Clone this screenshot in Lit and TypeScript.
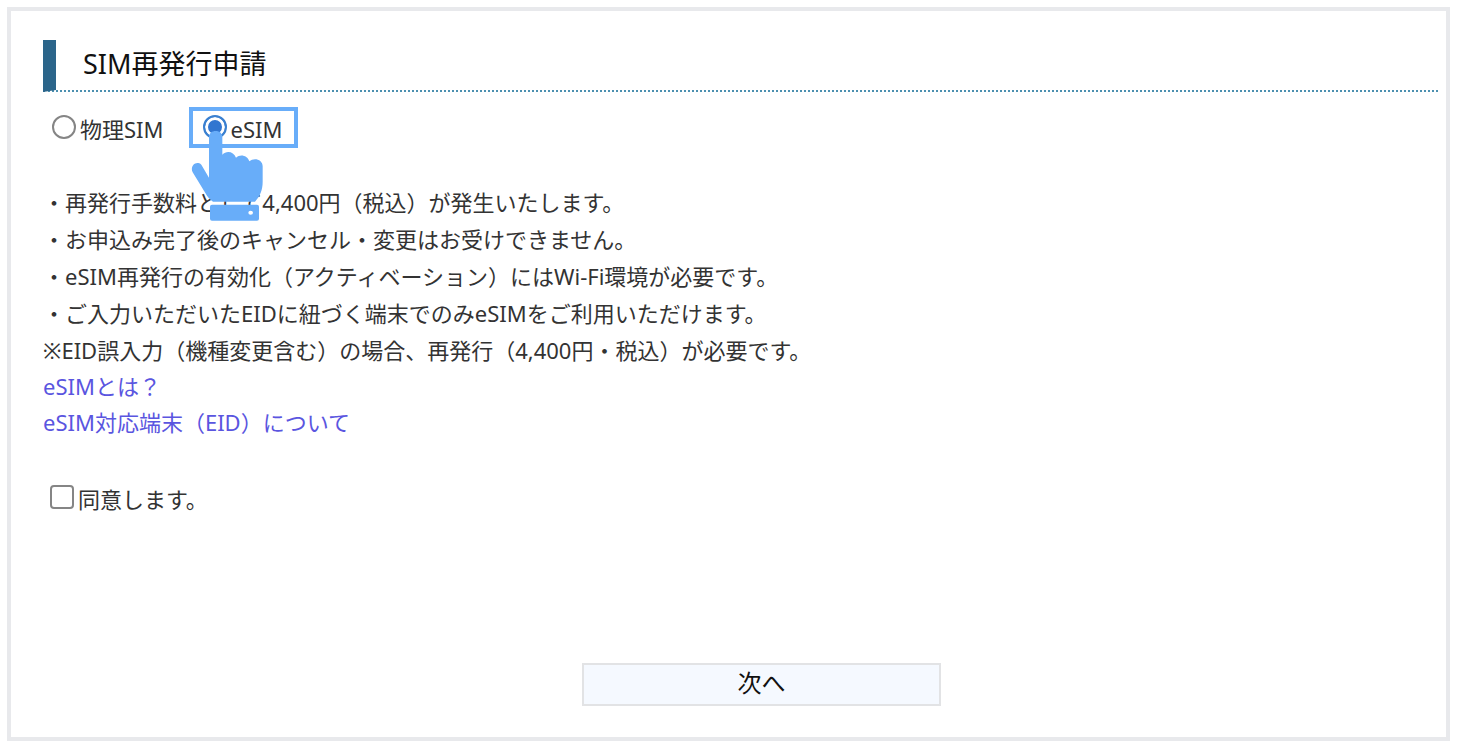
import { LitElement, html, css } from "lit";
import { customElement, state } from "lit/decorators.js";

@customElement("app-root")
export class AppRoot extends LitElement {
  static styles = css`
    :host {
      display: block;
      box-sizing: border-box;
      padding: 7px 8px 9px 7px;
      background: #fff;
      color: #333;
      font-family: "Noto Sans", "Noto Sans CJK JP", sans-serif;
      font-size: 22px;
    }
    .card {
      box-sizing: border-box;
      min-height: calc(100vh - 16px);
      display: flex;
      flex-direction: column;
      border: 4px solid #e8e9ec;
      padding: 29px 8px 31px 32px;
    }
    .title {
      margin: 0;
      padding: 0 0 2px 27px;
      border-left: 13px solid #2b658a;
      border-bottom: 2px dotted #4c90b0;
      color: #111;
      font-size: 27px;
      font-weight: 400;
      line-height: 48px;
    }
    .options {
      display: flex;
      gap: 25px;
      margin: 15px 0 36px 9px;
      padding: 0;
      border: 0;
    }
    .choice {
      position: relative;
      display: flex;
      align-items: center;
      gap: 4px;
      line-height: 29px;
      padding: 8px 0 4px;
    }
    .marked {
      padding: 4px 12px 0 10px;
      border: 4px solid #68adf9;
    }
    .agree {
      align-self: flex-start;
      margin: 37px 0 0 7px;
    }
    .tick {
      appearance: none;
      box-sizing: border-box;
      flex: none;
      width: 24px;
      height: 24px;
      margin: 0 0 5px;
      border: 2px solid #858585;
      background: #fff;
    }
    .tick[type="radio"] {
      border-radius: 50%;
    }
    .tick[type="checkbox"] {
      border-radius: 4px;
    }
    .tick:checked {
      border-color: #3a80d0;
      background: #3276d0;
      box-shadow: inset 0 0 0 3px #fff;
    }
    .hand {
      position: absolute;
      left: -3px;
      top: 19px;
      width: 74px;
      height: 92px;
      pointer-events: none;
    }
    .notes {
      list-style: none;
      margin: 0;
      padding: 0;
      line-height: 37px;
    }
    .note {
      margin: 0;
      line-height: 36px;
    }
    .links {
      display: flex;
      flex-direction: column;
      align-items: flex-start;
      line-height: 36px;
    }
    .link {
      color: #5a55e0;
      text-decoration: none;
    }
    .actions {
      display: flex;
      justify-content: center;
      margin-top: auto;
      padding: 37px 0 0 42px;
    }
    .next {
      width: 359px;
      height: 43px;
      padding: 0 0 3px;
      border: 2px solid #e2e3e5;
      background: #f5f9ff;
      color: #111;
      font-family: inherit;
      font-size: 24px;
      line-height: 36px;
    }
  `;

  @state() private kind = "esim";

  private pick(kind: string) {
    this.kind = kind;
  }

  render() {
    return html`
      <main class="card" lang="ja">
        <h1 class="title">SIM再発行申請</h1>
        <fieldset class="options" aria-label="SIM">
          <label class="choice">
            <input class="tick" type="radio" name="kind" value="physical"
              .checked=${this.kind === "physical"} @change=${() => this.pick("physical")} />
            <span>物理SIM</span>
          </label>
          <label class="choice marked">
            <input class="tick" type="radio" name="kind" value="esim"
              .checked=${this.kind === "esim"} @change=${() => this.pick("esim")} />
            <span>eSIM</span>
            <svg class="hand" viewBox="30 90 222 276" aria-hidden="true">
              <path fill="#68adf9" d="M87 112C87 99 96 93 107 93S127 99 127 112V164C139 151 161 154 168 173C181 161 202 166 208 184C222 171 248 178 248 199V245C248 270 240 288 225 305H99C88 298 82 290 76 279L38 217C29 200 47 180 64 194L87 233Z"/>
              <path fill="#68adf9" fill-rule="evenodd" d="M96 314H231Q237 314 237 320V356Q237 362 231 362H96Q90 362 90 356V320Q90 314 96 314ZM212 332A7 6 0 1 0 212 344A7 6 0 1 0 212 332Z"/>
            </svg>
          </label>
        </fieldset>
        <ul class="notes">
          <li>・再発行手数料として4,400円（税込）が発生いたします。</li>
          <li>・お申込み完了後のキャンセル・変更はお受けできません。</li>
          <li>・eSIM再発行の有効化（アクティベーション）にはWi-Fi環境が必要です。</li>
          <li>・ご入力いただいたEIDに紐づく端末でのみeSIMをご利用いただけます。</li>
        </ul>
        <p class="note">※EID誤入力（機種変更含む）の場合、再発行（4,400円・税込）が必要です。</p>
        <nav class="links">
          <a class="link" href="#esim">eSIMとは？</a>
          <a class="link" href="#eid">eSIM対応端末（EID）について</a>
        </nav>
        <label class="choice agree">
          <input class="tick" type="checkbox" name="agree" />
          <span>同意します。</span>
        </label>
        <div class="actions">
          <button class="next" type="button">次へ</button>
        </div>
      </main>
    `;
  }
}
